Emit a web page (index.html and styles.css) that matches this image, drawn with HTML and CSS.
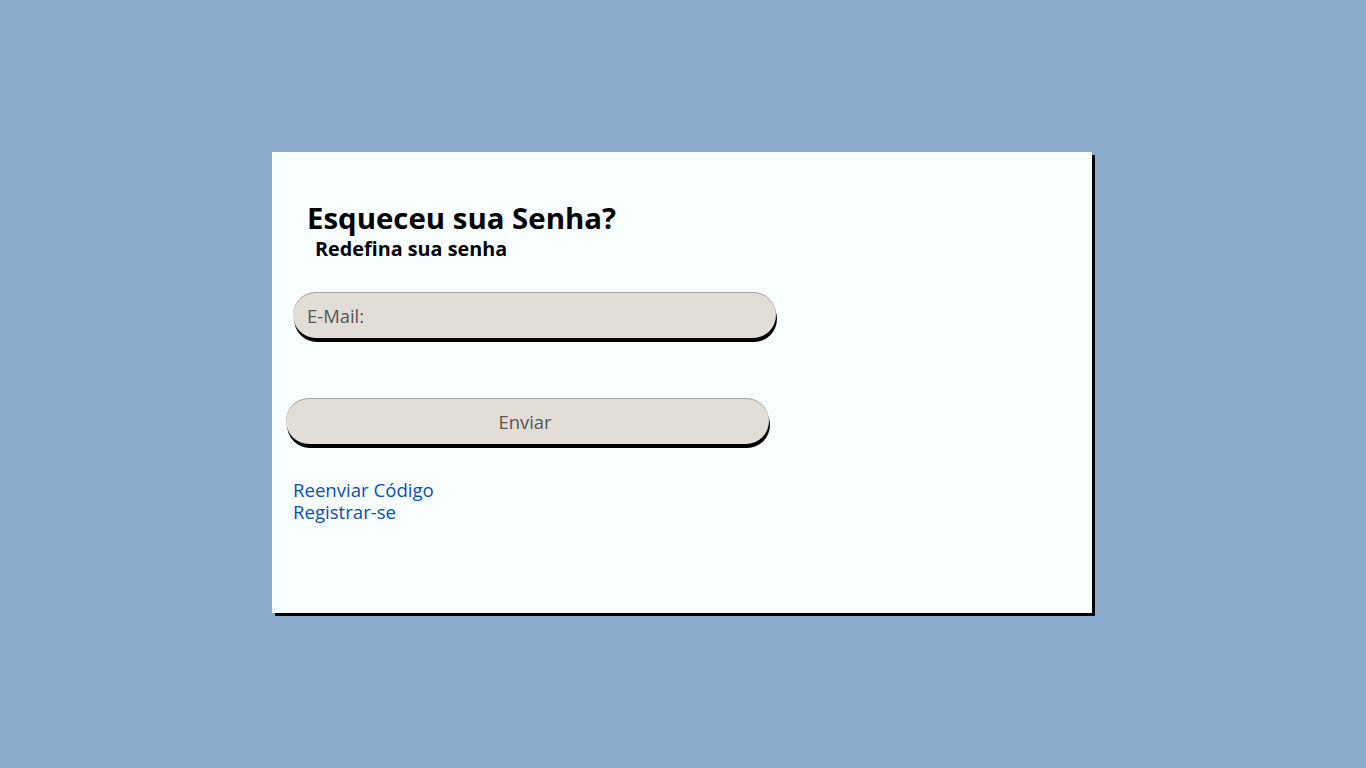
FILE: index.html
```html
<!DOCTYPE html>
<html lang="pt-BR">
<head>
<meta charset="utf-8">
<title>Esqueceu sua Senha?</title>
<link rel="stylesheet" href="styles.css">
</head>
<body>
<main class="page">
  <section class="card">
    <h1 class="title">Esqueceu sua Senha?</h1>
    <h2 class="subtitle">Redefina sua senha</h2>
    <form class="form">
      <input class="field" type="email" placeholder="E-Mail:">
      <button class="send" type="button">Enviar</button>
    </form>
    <nav class="links">
      <a href="#">Reenviar Código</a>
      <a href="#">Registrar-se</a>
    </nav>
  </section>
</main>
</body>
</html>
```

FILE: styles.css
```css
html, body {
  margin: 0;
  padding: 0;
  background: #8aabcb;
  font-family: "Open Sans", "Noto Sans", sans-serif;
}
.page {
  height: 768px;
  display: flex;
  justify-content: center;
  align-items: flex-start;
  padding-top: 152px;
  box-sizing: border-box;
}
.card {
  width: 820px;
  height: 461px;
  margin-right: 2px;
  background: #f9feff;
  box-shadow: 3px 3px 0 #000;
  box-sizing: border-box;
  padding: 46px 0 0 21px;
}
.title {
  margin: 0 0 0 14px;
  font-size: 29.4px;
  font-weight: 700;
  line-height: 40px;
  color: #000;
}
.subtitle {
  margin: -2px 0 0 22px;
  font-size: 19.8px;
  font-weight: 700;
  line-height: 26px;
  color: #000;
}
.form {
  display: flex;
  flex-direction: column;
  align-items: flex-start;
  margin-top: 30px;
}
.field, .send {
  width: 483px;
  height: 46px;
  border: none;
  border-radius: 23px;
  background: #e2ddd6;
  box-shadow: inset 0 1px 0 #a9a6a1, 1px 4px 0 #000;
  font-family: "Open Sans", "Noto Sans", sans-serif;
  font-size: 18.4px;
  color: #555;
  box-sizing: border-box;
  outline: none;
}
.field {
  padding: 0 14px;
}
.field::placeholder {
  color: #555;
}
.send {
  margin: 60px 0 0 -7px;
  padding: 0 5px 0 0;
  text-align: center;
}
.links {
  display: flex;
  flex-direction: column;
  margin-top: 35px;
}
.links a {
  color: #0a4fb0;
  text-decoration: none;
  font-size: 18.6px;
  line-height: 22px;
  width: max-content;
}
```
